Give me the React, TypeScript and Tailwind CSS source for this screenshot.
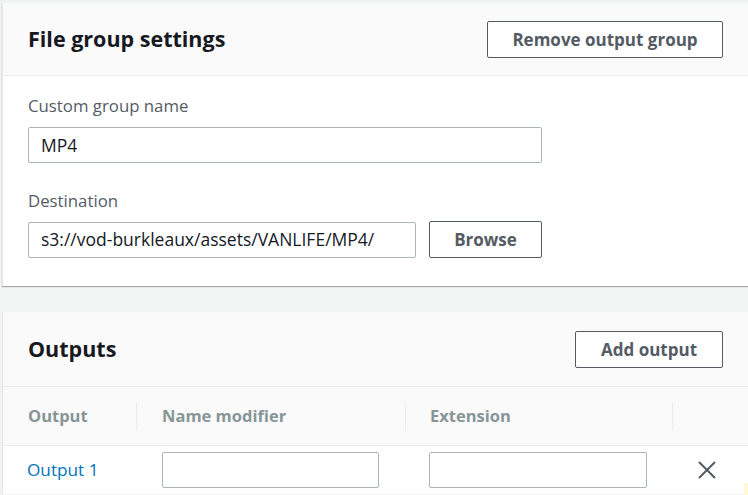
import React from "react";

const font = { fontFamily: "'Open Sans', Roboto, 'Liberation Sans', Arial, sans-serif" };

function Button({ children, className = "" }: { children: React.ReactNode; className?: string }) {
  return (
    <button
      className={
        "h-[37px] border border-[#545b64] rounded-[2px] bg-white text-[#545b64] font-bold text-[17px] leading-none flex items-center justify-center " +
        className
      }
    >
      {children}
    </button>
  );
}

function Input({ value = "", className = "" }: { value?: string; className?: string }) {
  return (
    <div
      className={
        "h-[36px] border border-[#aab7b8] rounded-[2px] bg-white flex items-center px-[12px] text-[17.5px] text-[#16191f] whitespace-nowrap overflow-hidden " +
        className
      }
    >
      {value}
    </div>
  );
}

export default function App() {
  return (
    <div className="w-[748px] h-[495px] overflow-hidden bg-[#f2f3f3] relative" style={font}>
      <div className="pt-[3px] pl-[2px] flex flex-col gap-[26px]">
        {/* File group settings */}
        <div className="w-[747px] bg-white border-l border-[#e3e6e6] shadow-[0_1px_1px_0_rgba(0,28,36,0.35)]">
          <div className="h-[73px] bg-[#fafafa] border-b border-[#eaeded] flex items-center justify-between pl-[25px] pr-[26px]">
            <h2 className="text-[21.5px] font-bold text-[#16191f]">File group settings</h2>
            <Button className="w-[236px]">Remove output group</Button>
          </div>
          <div className="pl-[25px] pt-[18px] pb-[28px]">
            <div className="text-[16.8px] text-[#545b64] leading-[24px]">Custom group name</div>
            <Input value="MP4" className="w-[514px] mt-[9px]" />
            <div className="text-[16.8px] text-[#545b64] leading-[24px] mt-[26px]">Destination</div>
            <div className="flex items-center gap-[13px] mt-[8px]">
              <Input value="s3://vod-burkleaux/assets/VANLIFE/MP4/" className="w-[388px]" />
              <Button className="w-[113px] h-[36px]">Browse</Button>
            </div>
          </div>
        </div>

        {/* Outputs */}
        <div className="w-[747px] bg-white border-l border-[#e3e6e6]">
          <div className="h-[75px] bg-[#fafafa] border-b border-[#eaeded] flex items-center justify-between pl-[25px] pr-[26px]">
            <h2 className="text-[21.5px] font-bold text-[#16191f]">Outputs</h2>
            <Button className="w-[148px]">Add output</Button>
          </div>
          <div className="grid grid-cols-[133px_269px_267px_1fr]">
            <div className="h-[59px] bg-[#fafafa] border-b border-[#eaeded] flex items-center pl-[25px] text-[16.5px] font-bold text-[#879596]">
              Output
            </div>
            <div className="h-[59px] bg-[#fafafa] border-b border-[#eaeded] flex items-center">
              <div className="w-px h-[29px] bg-[#eaeded]" />
              <span className="pl-[25px] text-[16.5px] font-bold text-[#879596]">Name modifier</span>
            </div>
            <div className="h-[59px] bg-[#fafafa] border-b border-[#eaeded] flex items-center">
              <div className="w-px h-[29px] bg-[#eaeded]" />
              <span className="pl-[24px] text-[16.5px] font-bold text-[#879596]">Extension</span>
            </div>
            <div className="h-[59px] bg-[#fafafa] border-b border-[#eaeded] flex items-center">
              <div className="w-px h-[29px] bg-[#eaeded]" />
            </div>

            <div className="h-[48px] flex items-center pl-[24px] text-[17.2px] text-[#0073bb]">Output 1</div>
            <div className="h-[48px] flex items-center pl-[26px] pr-[26px]">
              <Input className="w-full" />
            </div>
            <div className="h-[48px] flex items-center pl-[24px] pr-[25px]">
              <Input className="w-full" />
            </div>
            <div className="h-[48px] flex items-center pl-[26px]">
              <svg width="18" height="18" viewBox="0 0 18 18" className="text-[#545b64]">
                <path d="M1 1 L17 17 M17 1 L1 17" stroke="currentColor" strokeWidth="2" fill="none" />
              </svg>
            </div>
          </div>
        </div>
      </div>
      <div className="absolute left-[744px] top-[483px] w-[6px] h-[14px] bg-[#fff9d6]" />
    </div>
  );
}
